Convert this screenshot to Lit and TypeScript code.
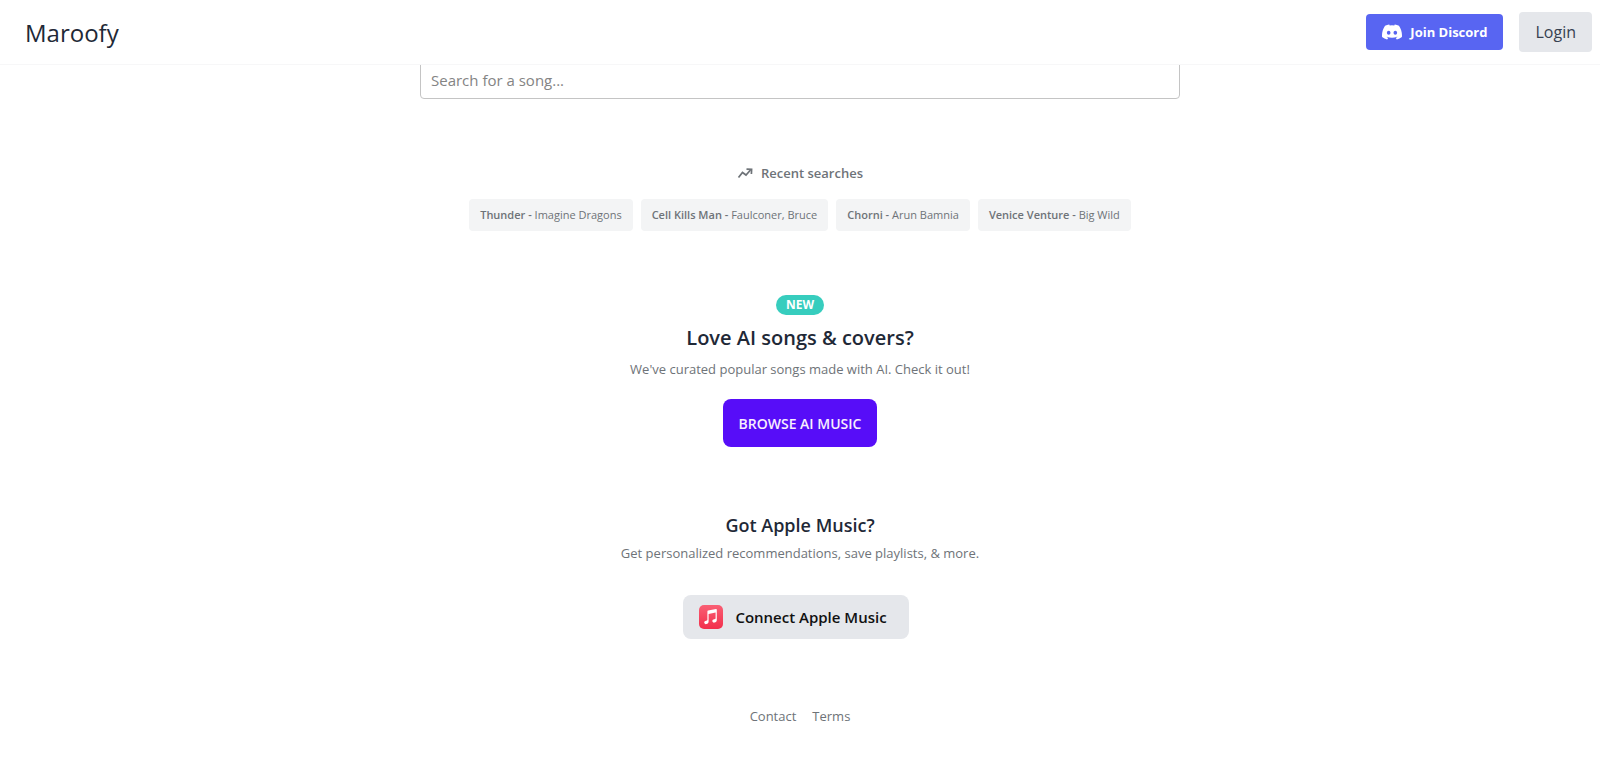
import { LitElement, html, css } from "lit";
import { customElement, property } from "lit/decorators.js";

interface Search {
  title: string;
  artist: string;
}

@customElement("site-header")
class SiteHeader extends LitElement {
  static styles = css`
    :host {
      display: block;
    }
    .bar {
      box-sizing: border-box;
      display: flex;
      align-items: center;
      justify-content: space-between;
      height: 65px;
      padding: 0 8px 0 25px;
      background: #fff;
      border-bottom: 1px solid #f7f7f8;
    }
    .brand {
      padding-top: 2px;
      font-size: 24px;
      line-height: 32px;
      font-weight: 500;
      color: #1f2937;
      text-decoration: none;
    }
    .actions {
      display: flex;
      align-items: center;
      gap: 16px;
    }
    .discord {
      display: flex;
      align-items: center;
      gap: 8px;
      height: 36px;
      padding: 0 16px;
      box-sizing: border-box;
      border-radius: 4px;
      background: #5865f2;
      color: #fff;
      font-size: 13px;
      font-weight: 700;
      text-decoration: none;
    }
    .discord svg {
      width: 20px;
      height: 20px;
    }
    .login {
      height: 40px;
      padding: 0 16px;
      border: 0;
      border-radius: 4px;
      background: #e5e7eb;
      color: #374151;
      font: inherit;
      font-size: 16px;
      font-weight: 500;
      cursor: pointer;
    }
  `;

  render() {
    return html`
      <header class="bar">
        <a class="brand" href="#">Maroofy</a>
        <div class="actions">
          <a class="discord" href="#discord">
            <svg viewBox="0 0 24 24" fill="currentColor" aria-hidden="true">
              <path
                d="M20.317 4.37a19.79 19.79 0 0 0-4.885-1.515.074.074 0 0 0-.079.037c-.21.375-.444.864-.608 1.25a18.27 18.27 0 0 0-5.487 0 12.64 12.64 0 0 0-.617-1.25.077.077 0 0 0-.079-.037A19.736 19.736 0 0 0 3.677 4.37a.07.07 0 0 0-.032.027C.533 9.046-.32 13.58.099 18.057a.082.082 0 0 0 .031.057 19.9 19.9 0 0 0 5.993 3.03.078.078 0 0 0 .084-.028c.462-.63.874-1.295 1.226-1.994a.076.076 0 0 0-.041-.106 13.107 13.107 0 0 1-1.872-.892.077.077 0 0 1-.008-.128c.126-.094.252-.192.372-.292a.074.074 0 0 1 .077-.01c3.928 1.793 8.18 1.793 12.062 0a.074.074 0 0 1 .078.01c.12.098.246.198.373.292a.077.077 0 0 1-.006.127 12.3 12.3 0 0 1-1.873.892.077.077 0 0 0-.041.107c.36.698.772 1.362 1.225 1.993a.076.076 0 0 0 .084.028 19.839 19.839 0 0 0 6.002-3.03.077.077 0 0 0 .032-.054c.5-5.177-.838-9.674-3.549-13.66a.061.061 0 0 0-.031-.03zM8.02 15.33c-1.183 0-2.157-1.085-2.157-2.419 0-1.333.956-2.419 2.157-2.419 1.21 0 2.176 1.096 2.157 2.42 0 1.333-.956 2.418-2.157 2.418zm7.975 0c-1.183 0-2.157-1.085-2.157-2.419 0-1.333.955-2.419 2.157-2.419 1.21 0 2.176 1.096 2.157 2.42 0 1.333-.946 2.418-2.157 2.418z"
              />
            </svg>
            <span>Join Discord</span>
          </a>
          <button class="login" type="button">Login</button>
        </div>
      </header>
    `;
  }
}

@customElement("recent-searches")
class RecentSearches extends LitElement {
  @property({ attribute: false }) items: Search[] = [];

  static styles = css`
    :host {
      display: flex;
      flex-direction: column;
      align-items: center;
      gap: 16px;
      color: #6e7378;
    }
    .title {
      display: flex;
      align-items: center;
      gap: 8px;
      margin: 0;
      font-size: 13px;
      line-height: 20px;
      font-weight: 600;
    }
    .title svg {
      width: 16px;
      height: 16px;
    }
    .chips {
      display: flex;
      flex-wrap: wrap;
      justify-content: center;
      gap: 8px;
      margin: 0;
      padding: 0;
      list-style: none;
    }
    .chip {
      display: block;
      padding: 8px 11px;
      border-radius: 4px;
      background: #f3f4f5;
      color: inherit;
      font-size: 11px;
      line-height: 16px;
      text-decoration: none;
    }
    .song {
      font-weight: 600;
    }
  `;

  render() {
    return html`
      <h2 class="title">
        <svg viewBox="0 0 16 16" fill="none" stroke="currentColor" stroke-width="1.7" aria-hidden="true">
          <path d="M1.500 12.5 5.500 7.500 9 10 13.500 5" />
          <path d="M9.500 4.200 14.600 4.400 14.400 9" />
        </svg>
        <span>Recent searches</span>
      </h2>
      <ul class="chips">
        ${this.items.map(
          (s) => html`<li>
            <a class="chip" href="#search"><span class="song">${s.title} -</span> ${s.artist}</a>
          </li>`
        )}
      </ul>
    `;
  }
}

@customElement("app-root")
class AppRoot extends LitElement {
  private searches: Search[] = [
    { title: "Thunder", artist: "Imagine Dragons" },
    { title: "Cell Kills Man", artist: "Faulconer, Bruce" },
    { title: "Chorni", artist: "Arun Bamnia" },
    { title: "Venice Venture", artist: "Big Wild" },
  ];

  static styles = css`
    :host {
      display: block;
      min-height: 100vh;
      background: #fff;
      font-family: "Open Sans", "Noto Sans", sans-serif;
      color: #1f2937;
    }
    .top {
      position: fixed;
      inset: 0 0 auto;
      z-index: 1;
    }
    main {
      display: flex;
      flex-direction: column;
      align-items: center;
      gap: 64px;
      padding: 59px 16px 0;
    }
    .search {
      box-sizing: border-box;
      width: 100%;
      max-width: 760px;
      height: 40px;
      padding: 2px 10px 0;
      border: 1px solid #c4c4c4;
      border-radius: 4px;
      background: #fff;
      color: #1f2937;
      font: inherit;
      font-size: 15px;
    }
    .search::placeholder {
      color: #848484;
      opacity: 1;
    }
    .promo {
      display: flex;
      flex-direction: column;
      align-items: center;
      text-align: center;
    }
    .badge {
      padding: 0 10px;
      border-radius: 10px;
      background: #37cdbe;
      color: #fff;
      font-size: 12px;
      line-height: 20px;
      font-weight: 700;
    }
    h2 {
      margin: 0;
      line-height: 28px;
      font-weight: 600;
    }
    .large {
      margin-top: 9px;
      font-size: 20px;
    }
    .medium {
      font-size: 18px;
    }
    p {
      margin: 0;
      font-size: 13px;
      line-height: 20px;
      color: #6e7378;
    }
    .large + p {
      margin-top: 7px;
    }
    .medium + p {
      margin-top: 4px;
    }
    .browse {
      height: 48px;
      margin-top: 20px;
      padding: 0 16px;
      border: 0;
      border-radius: 8px;
      background: #570df8;
      color: #f8eefe;
      font: inherit;
      font-size: 14px;
      font-weight: 600;
      text-transform: uppercase;
      cursor: pointer;
    }
    .connect {
      display: flex;
      align-items: center;
      gap: 12px;
      height: 44px;
      margin: 32px 8px 0 0;
      padding: 0 22px 0 16px;
      border: 0;
      border-radius: 8px;
      background: #e5e7eb;
      color: #111;
      font: inherit;
      font-size: 15px;
      font-weight: 600;
      cursor: pointer;
    }
    .connect svg {
      width: 24px;
      height: 24px;
    }
    footer {
      display: flex;
      gap: 16px;
      font-size: 13px;
      line-height: 26px;
    }
    footer a {
      color: #6e7378;
      text-decoration: none;
    }
  `;

  render() {
    return html`
      <site-header class="top"></site-header>
      <main>
        <input class="search" type="search" aria-label="Search for a song" placeholder="Search for a song..." />
        <recent-searches .items=${this.searches}></recent-searches>
        <section class="promo">
          <span class="badge">NEW</span>
          <h2 class="large">Love AI songs &amp; covers?</h2>
          <p>We've curated popular songs made with AI. Check it out!</p>
          <button class="browse" type="button">Browse AI Music</button>
        </section>
        <section class="promo">
          <h2 class="medium">Got Apple Music?</h2>
          <p>Get personalized recommendations, save playlists, &amp; more.</p>
          <button class="connect" type="button">
            <svg viewBox="0 0 24 24" aria-hidden="true">
              <defs>
                <linearGradient id="tile" x1="0" y1="0" x2="0" y2="1">
                  <stop offset="0" stop-color="#f95f74" />
                  <stop offset="1" stop-color="#f22f4c" />
                </linearGradient>
              </defs>
              <rect width="24" height="24" rx="5" fill="url(#tile)" />
              <path
                fill="#fff"
                d="M17.800 4.600v10.500c0 1.500-.9 2.300-2.300 2.500-1.300.2-2.200-.5-2.200-1.500 0-1.100.8-1.700 2-1.900l.7-.2c.4-.1.6-.3.600-.7V7.600L9.600 9v7.600c0 1.500-.9 2.300-2.200 2.500-1.300.2-2.200-.5-2.200-1.500 0-1.100.8-1.700 2-1.900l.6-.2c.4-.1.600-.3.600-.7V6.500c0-.5.2-.8.700-.9l7.900-1.600c.5-.1.8.1.8.600z"
              />
            </svg>
            <span>Connect Apple Music</span>
          </button>
        </section>
        <footer>
          <a href="#contact">Contact</a>
          <a href="#terms">Terms</a>
        </footer>
      </main>
    `;
  }
}
